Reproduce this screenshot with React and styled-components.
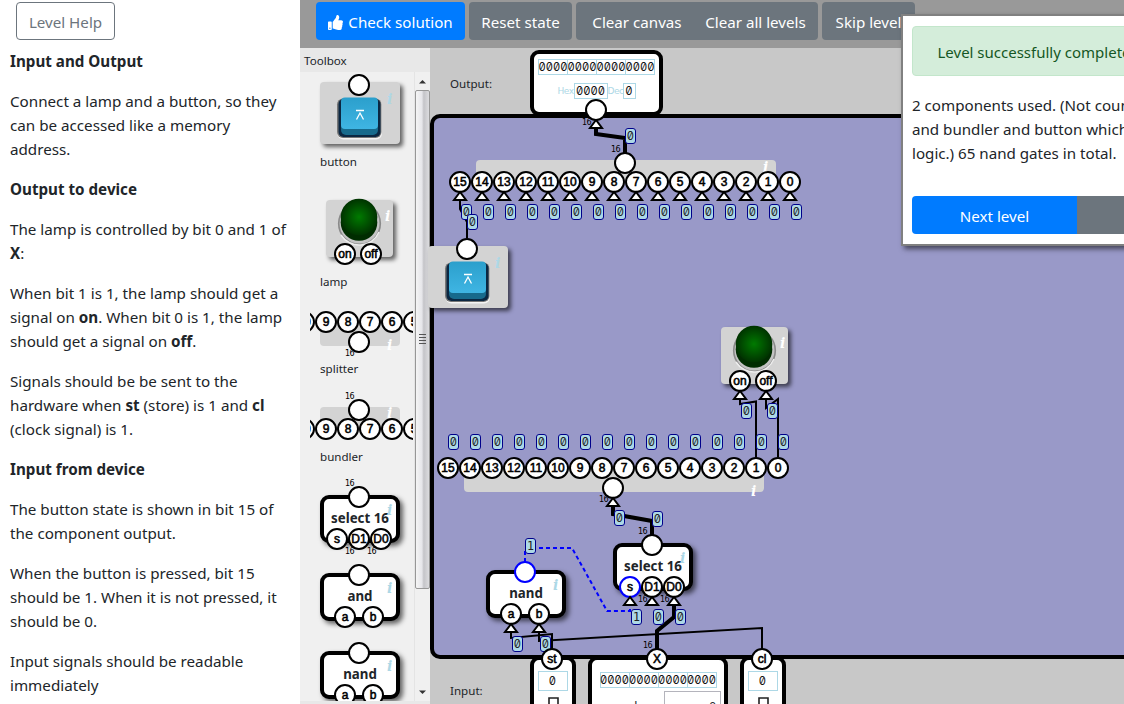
import React from "react";
import styled, { createGlobalStyle, css } from "styled-components";
import { FaThumbsUp } from "react-icons/fa";

const Global = createGlobalStyle`
  * { box-sizing: border-box; }
  html, body { margin: 0; height: 100%; overflow: hidden; }
  body {
    font-family: "Noto Sans", sans-serif;
    font-size: 15.15px;
    line-height: 24px;
    color: #212529;
    background: #fff;
  }
`;

/* Diagram coordinates are window coordinates; the canvas begins here. */
const ORIGIN = { x: 430, y: 48 };

const Page = styled.div`
  display: flex;
  width: 1124px;
  height: 704px;
  overflow: hidden;
`;

/* ---------- help column ---------- */
const Help = styled.aside`
  flex: 0 0 300px;
  min-width: 0;
  padding: 2px 0 0 10px;
`;
const buttonBase = css`
  height: 38px;
  border: 1px solid transparent;
  font: inherit;
  line-height: 24px;
  display: inline-flex;
  align-items: center;
  justify-content: center;
  padding: 2px 0 0;
  white-space: nowrap;
`;
const HelpButton = styled.button`
  ${buttonBase}
  display: flex;
  width: 99px;
  margin: 0 0 9px 6px;
  border-color: #6c757d;
  border-radius: 4px;
  background: #fff;
  color: #6c757d;
`;
const HelpText = styled.p`
  margin: 0 0 16px;
  white-space: nowrap;
  font-size: 15.2px;
`;
const HelpTitle = styled(HelpText)`
  font-weight: 700;
`;

/* ---------- top bar ---------- */
const Main = styled.main`
  flex: 1;
  min-width: 0;
  display: flex;
  flex-direction: column;
  position: relative;
`;
const TopBar = styled.header`
  flex: 0 0 48px;
  display: flex;
  align-items: flex-start;
  gap: 4px;
  padding: 2px 0 0 16px;
  background: #999;
`;
const BarButton = styled.button`
  ${buttonBase}
  flex: 0 0 auto;
  gap: 5px;
  width: ${(p) => p.$w}px;
  padding-right: ${(p) => p.$padRight || 0}px;
  border-radius: ${(p) => p.$radius || "4px"};
  background: ${(p) => (p.$primary ? "#007bff" : "#6c757d")};
  color: #fff;
`;
const ButtonGroup = styled.div`
  display: flex;
`;

const Body = styled.div`
  flex: 1;
  display: flex;
  min-height: 0;
`;

/* ---------- toolbox ---------- */
const Toolbox = styled.section`
  flex: 0 0 130px;
  min-width: 0;
  display: flex;
  flex-direction: column;
  background: #e8e8e8;
`;
const ToolboxTitle = styled.div`
  flex: 0 0 24px;
  padding: 3px 0 1px 4px;
  font-size: 11.6px;
  line-height: 20px;
`;
const ToolboxBody = styled.div`
  display: flex;
  height: 629px;
  background: #f0f0f0;
`;
const ToolList = styled.div`
  margin-left: 10px;
  width: 103px;
  padding-left: 10px;
  overflow: hidden;
`;
const Tool = styled.div`
  padding-top: ${(p) => p.$gap}px;
  padding-left: ${(p) => p.$indent || 0}px;
`;
const ToolLabel = styled.div`
  margin-top: ${(p) => p.$top}px;
  margin-left: -${(p) => p.$outdent || 0}px;
  height: 18px;
  line-height: 18px;
  font-size: 11.6px;
`;
const Scrollbar = styled.div`
  width: 16px;
  margin-left: 1px;
  display: flex;
  flex-direction: column;
  align-items: center;
  background: #f0f0f0;
  border-left: 1px solid #e4e4e4;
`;
const ScrollArrow = styled.div`
  height: 18px;
  display: flex;
  align-items: center;
`;
const ScrollThumb = styled.div`
  width: 15px;
  height: 499px;
  border: 1px solid #979797;
  border-radius: 2px;
  background: linear-gradient(90deg, #f5f5f5, #e6e6ea 45%, #c4c4c8 60%, #dcdcdf);
  display: flex;
  flex-direction: column;
  align-items: center;
  justify-content: center;
  gap: 1px;
`;
const Grip = styled.div`
  width: 7px;
  height: 1px;
  background: #555;
  margin-bottom: 1px;
`;
const ScrollTrack = styled.div`
  flex: 1;
`;

/* ---------- canvas ---------- */
const Canvas = styled.section`
  flex: 1;
  min-width: 0;
  position: relative;
  background: #c8c8c8;
  display: flex;
  flex-direction: column;
`;
const PortRow = styled.div`
  flex: 0 0 ${(p) => p.$h}px;
  padding: ${(p) => p.$top}px 0 0 20px;
  font-size: 11.6px;
  line-height: 18px;
`;
const Board = styled.div`
  flex: 0 0 545px;
  margin-right: -40px;
  border: 4px solid #000;
  border-radius: 10px;
  background: #9999c8;
`;
const Placed = styled.div`
  position: absolute;
  left: ${(p) => p.$x - ORIGIN.x}px;
  top: ${(p) => p.$y - ORIGIN.y}px;
`;
const WireLayer = styled.svg`
  position: absolute;
  left: 0;
  top: 0;
  width: 694px;
  height: 656px;
`;

/* ---------- components on the canvas and in the toolbox ---------- */
const PinCircle = styled.span`
  position: absolute;
  left: ${(p) => p.$cx - 11}px;
  top: ${(p) => p.$cy - 11}px;
  width: 22px;
  height: 22px;
  border: 2px solid ${(p) => (p.$on ? "#0000ff" : "#000")};
  border-radius: 50%;
  background: #fff;
  color: #000;
  display: flex;
  align-items: center;
  justify-content: center;
  font: 400 12px/18px "Liberation Sans", sans-serif;
  -webkit-text-stroke: 0.55px #000;
  white-space: nowrap;
`;
const Width = styled.span`
  position: absolute;
  left: ${(p) => p.$cx - 5}px;
  top: ${(p) => p.$cy - 6}px;
  font: 400 8px/12px "DejaVu Sans", sans-serif;
  letter-spacing: -0.6px;
  color: #000;
`;
const Info = styled.span`
  position: absolute;
  left: ${(p) => p.$cx - 3}px;
  top: ${(p) => p.$cy - 8}px;
  font: italic 700 14px/16px "DejaVu Serif", serif;
  color: ${(p) => (p.$white ? "#fff" : "#add8e6")};
`;
const GateBody = styled.div`
  position: relative;
  width: 80px;
  height: 48px;
  border: 4px solid #000;
  border-radius: 9px;
  background: #fff;
  box-shadow: 3px 3px 5px rgba(0, 0, 0, 0.6);
  font-weight: 700;
  font-size: 13.3px;
  line-height: 18px;
  text-align: center;
  white-space: nowrap;
  padding-top: 10px;
`;
const PinLayer = styled.div`
  position: absolute;
  left: -4px;
  top: -4px;
`;
const Plate = styled.div`
  position: relative;
  width: ${(p) => p.$w}px;
  height: ${(p) => p.$h}px;
  border-radius: 4px;
  background: #d3d3d3;
  box-shadow: ${(p) => (p.$flat ? "none" : "3px 3px 4px rgba(0,0,0,.6)")};
`;
const Drawing = styled.svg`
  position: absolute;
  left: 0;
  top: 0;
  overflow: visible;
`;

/* Zeros are slashed; the monospace face is kept for the serifed one. */
const slashedZero = css`
  font-family: "Inter", "DejaVu Sans Mono", monospace;
  font-size: 11.2px;
  font-feature-settings: "zero" 1, "tnum" 1;
`;
const Badge = styled.span`
  position: absolute;
  left: ${(p) => p.$x - ORIGIN.x - 5}px;
  top: ${(p) => p.$y - ORIGIN.y - 8}px;
  width: 11px;
  height: 16px;
  border: 1px solid #00008b;
  border-radius: 3px;
  background: #add8e6;
  color: #222;
  font: 400 11.6px/14px "DejaVu Sans Mono", monospace;
  ${(p) => p.children === "0" && slashedZero}
  text-align: center;
  display: flex;
  justify-content: center;
`;

const Pin = ({ x, y, on, children }) => (
  <PinCircle $cx={x} $cy={y} $on={on}>{children}</PinCircle>
);

function Gate({ label, inputs, wide, on, litInput }) {
  return (
    <GateBody>
      {label}
      <PinLayer>
        <Info $cx={70} $cy={15}>i</Info>
        <Pin x={39} y={2} on={on} />
        {inputs.map((name, i) => (
          <Pin key={name} x={wide ? 17 + i * 22 : 25 + i * 28} y={44} on={litInput === name}>{name}</Pin>
        ))}
        {wide && (
          <>
            <Width $cx={30} $cy={-11}>16</Width>
            <Width $cx={30} $cy={57}>16</Width>
            <Width $cx={52} $cy={57}>16</Width>
          </>
        )}
      </PinLayer>
    </GateBody>
  );
}

function PushButton() {
  return (
    <Plate $w={80} $h={62}>
      <Drawing width="80" height="62">
        <defs>
          <linearGradient id="keyFace" x1="0" y1="0" x2="0" y2="1">
            <stop offset="0" stopColor="#2b9fcc" />
            <stop offset="1" stopColor="#3fb5e3" />
          </linearGradient>
        </defs>
        <rect x="17.5" y="18" width="44.5" height="39.5" rx="6" fill="#f4f4f4" />
        <rect x="17" y="16.5" width="44.5" height="39.5" rx="6" fill="#777" />
        <rect x="18.5" y="17" width="42" height="38" rx="5" fill="#0b2742" />
        <rect x="21" y="18" width="37" height="35" rx="5" fill="#176a8c" />
        <rect x="21" y="15.5" width="37" height="31.5" rx="4" fill="url(#keyFace)" />
        <path d="M36 28.5h8M36.5 37.5l3.5-6.5 3.5 6.5" fill="none" stroke="#fff" strokeWidth="1.3" />
      </Drawing>
      <Info $cx={70} $cy={17}>i</Info>
      <Pin x={39} y={3} />
    </Plate>
  );
}

function Lamp() {
  return (
    <Plate $w={67} $h={57}>
      <Drawing width="67" height="57">
        <defs>
          <radialGradient id="lampGlow" cx="50%" cy="50%" r="50%">
            <stop offset="0" stopColor="#007a00" />
            <stop offset="1" stopColor="#003300" />
          </radialGradient>
        </defs>
        <circle cx="33.5" cy="23.5" r="20.8" fill="#c4c4c4" stroke="#8a8a8a" strokeWidth="1.6" />
        <path d="M15 35a21.5 21.5 0 0 0 38-3" fill="none" stroke="#eee" strokeWidth="1.5" />
        <circle cx="33" cy="22.5" r="18.3" fill="#002c00" />
        <circle cx="33" cy="17" r="18.3" fill="url(#lampGlow)" />
      </Drawing>
      <Info $white $cx={62} $cy={16}>i</Info>
      <Pin x={19} y={54}>on</Pin>
      <Pin x={45} y={54}>off</Pin>
    </Plate>
  );
}

const BITS = Array.from({ length: 16 }, (_, i) => 15 - i);
const MIDDLE_BITS = [10, 9, 8, 7, 6, 5];

/* A 16-bit splitter (bits above) or bundler (bits below). */
function BitStrip({ bits = BITS, width, height, barPinX, bitsY, barPinY, widthMark, info }) {
  return (
    <Plate $flat $w={width} $h={height}>
      <Info $white $cx={info[0]} $cy={info[1]}>i</Info>
      {bits.map((bit, i) => (
        <Pin key={bit} x={i * 22 - 16} y={bitsY}>{bit}</Pin>
      ))}
      <Pin x={barPinX} y={barPinY} />
      <Width $cx={widthMark[0]} $cy={widthMark[1]}>16</Width>
    </Plate>
  );
}

/* ---------- input / output panels ---------- */
const Panel = styled.div`
  position: relative;
  width: ${(p) => p.$w}px;
  height: ${(p) => p.$h}px;
  border: 4px solid #000;
  border-radius: 9px;
  background: #fff;
  display: flex;
  flex-direction: column;
  align-items: center;
  padding-top: ${(p) => p.$pad}px;
`;
const Digits = styled.div`
  display: flex;
  padding-left: 1px;
`;
const Field = styled.span`
  flex: 0 0 auto;
  width: ${(p) => p.$w}px;
  height: ${(p) => p.$h || 16}px;
  margin-left: -1px;
  border: 1px solid #add8e6;
  background: #fff;
  color: #111;
  line-height: ${(p) => (p.$h || 16) - 2}px;
  ${slashedZero}
  display: flex;
  justify-content: center;
`;
const Values = styled.div`
  display: flex;
  align-items: center;
  margin-top: 8px;
`;
const Caption = styled.span`
  flex: 0 0 ${(p) => p.$w}px;
  font: 400 9px/14px "DejaVu Sans", sans-serif;
  letter-spacing: -0.5px;
  color: #add8e6;
`;
const Pulse = styled.svg`
  margin-top: 6px;
  display: block;
`;
const DecRow = styled.label`
  display: flex;
  align-self: stretch;
  margin-top: 3px;
  padding-left: 38px;
  font-size: 12px;
`;
const DecName = styled.span`
  flex: 0 0 34px;
  line-height: 31px;
`;
const DecInput = styled.span`
  flex: 0 0 57px;
  height: 24px;
  border: 1px solid #b4b4bc;
  padding-right: 4px;
  line-height: 29px;
  text-align: right;
`;
const Nibbles = () => (
  <Digits>
    {[0, 1, 2, 3].map((n) => <Field key={n} $w={30}>0000</Field>)}
  </Digits>
);

/* ---------- result dialog ---------- */
const Dialog = styled.div`
  position: absolute;
  left: 601px;
  top: 14px;
  width: 351px;
  height: 232px;
  padding: 10px 9px 0;
  border: 2px solid #808080;
  background: #fff;
  box-shadow: 3px 3px 5px rgba(0, 0, 0, 0.55);
`;
const Alert = styled.div`
  height: 50px;
  padding: 13px 24.5px;
  border: 1px solid #c3e6cb;
  border-radius: 4px;
  background: #d4edda;
  color: #155724;
  font-size: 15px;
  white-space: nowrap;
`;
const Result = styled.p`
  margin: 17px 0 31px;
  white-space: nowrap;
`;

const BOARD_BADGES = [
  [630, 136], [472, 222], [619, 518], [657, 519], [746, 411], [772, 411],
  [658, 617], [680, 617], [517, 644], [545, 644],
];
const ARROWS = [
  [596, 110], [613, 488], [740, 381], [766, 381], [511, 614], [539, 614],
  [630, 587], [652, 587], [674, 587],
  ...BITS.map((_, i) => [460 + i * 22, 182]),
];

function Wires() {
  return (
    <WireLayer viewBox="430 48 694 656">
      <g fill="none" stroke="#000" strokeWidth="2">
        <path d="M460 200v9l7 13v16" />
        <path d="M740 398v6l16-2.5v56" />
        <path d="M766 398v10l12-9v58" />
        <path d="M511 632v6l41-4v16" />
        <path d="M539 632v9L762 628v22" />
      </g>
      <g fill="none" stroke="#000" strokeWidth="4">
        <path d="M596 128v6l29 4v16" />
        <path d="M613 506v8l39 7v15" />
        <path d="M674 605v12l-17 14v18" />
      </g>
      <path d="M525 562v-14h47l35 63h23v-6" fill="none" stroke="#00f" strokeWidth="2" strokeDasharray="4 3" />
      <g fill="#fff" stroke="#000" strokeWidth="2">
        {ARROWS.map(([x, y], i) => (
          <path key={i} d={`M${x} ${y + 10}l-6 8h12z`} />
        ))}
      </g>
    </WireLayer>
  );
}

export default function App() {
  return (
    <Page>
      <Global />
      <Help>
        <HelpButton>Level Help</HelpButton>
        <HelpTitle>Input and Output</HelpTitle>
        <HelpText>Connect a lamp and a button, so they<br />can be accessed like a memory<br />address.</HelpText>
        <HelpTitle>Output to device</HelpTitle>
        <HelpText>The lamp is controlled by bit 0 and 1 of<br /><b>X</b>:</HelpText>
        <HelpText>When bit 1 is 1, the lamp should get a<br />signal on <b>on</b>. When bit 0 is 1, the lamp<br />should get a signal on <b>off</b>.</HelpText>
        <HelpText>Signals should be be sent to the<br />hardware when <b>st</b> (store) is 1 and <b>cl</b><br />(clock signal) is 1.</HelpText>
        <HelpTitle>Input from device</HelpTitle>
        <HelpText>The button state is shown in bit 15 of<br />the component output.</HelpText>
        <HelpText>When the button is pressed, bit 15<br />should be 1. When it is not pressed, it<br />should be 0.</HelpText>
        <HelpText>Input signals should be readable<br />immediately</HelpText>
      </Help>
      <Main>
        <TopBar>
          <BarButton $primary $w={149}><FaThumbsUp size={15} />Check solution</BarButton>
          <BarButton $w={103}>Reset state</BarButton>
          <ButtonGroup>
            <BarButton $w={122} $radius="4px 0 0 4px">Clear canvas</BarButton>
            <BarButton $w={120} $padRight={5} $radius="0 4px 4px 0">Clear all levels</BarButton>
          </ButtonGroup>
          <BarButton $w={93}>Skip level</BarButton>
        </TopBar>
        <Body>
          <Toolbox>
            <ToolboxTitle>Toolbox</ToolboxTitle>
            <ToolboxBody>
              <ToolList>
                <Tool $gap={10}><PushButton /><ToolLabel $top={9}>button</ToolLabel></Tool>
                <Tool $gap={29} $indent={6}><Lamp /><ToolLabel $top={16} $outdent={6}>lamp</ToolLabel></Tool>
                <Tool $gap={31}>
                  <BitStrip bits={MIDDLE_BITS} width={80} height={24} barPinX={39} bitsY={0} barPinY={20} widthMark={[30, 32]} info={[70, 23]} />
                  <ToolLabel $top={14}>splitter</ToolLabel>
                </Tool>
                <Tool $gap={29}>
                  <BitStrip bits={MIDDLE_BITS} width={80} height={23} barPinX={39} bitsY={22} barPinY={3} widthMark={[30, -10]} info={[70, 6]} />
                  <ToolLabel $top={18}>bundler</ToolLabel>
                </Tool>
                <Tool $gap={29}><Gate wide label="select 16" inputs={["s", "D1", "D0"]} /></Tool>
                <Tool $gap={30}><Gate label="and" inputs={["a", "b"]} /></Tool>
                <Tool $gap={30}><Gate label="nand" inputs={["a", "b"]} /></Tool>
              </ToolList>
              <Scrollbar>
                <ScrollArrow><svg width="8" height="5"><path d="M0 4.5L3.5 1 7 4.5z" fill="#333" /></svg></ScrollArrow>
                <ScrollThumb><Grip /><Grip /><Grip /><Grip /></ScrollThumb>
                <ScrollTrack />
                <ScrollArrow><svg width="8" height="5"><path d="M0 .5L3.5 4 7 .5z" fill="#333" /></svg></ScrollArrow>
              </Scrollbar>
            </ToolboxBody>
          </Toolbox>
          <Canvas>
            <PortRow $h={66} $top={27}>Output:</PortRow>
            <Board />
            <PortRow $h={45} $top={23}>Input:</PortRow>

            <Placed $x={530} $y={50}>
              <Panel $w={133} $h={66} $pad={5}>
                <Nibbles />
                <Values>
                  <Caption $w={17}>Hex</Caption>
                  <Field $w={34}>0000</Field>
                  <Caption $w={16}>Dec</Caption>
                  <Field $w={13}>0</Field>
                </Values>
              </Panel>
            </Placed>
            <Placed $x={530} $y={656}>
              <Panel $w={46} $h={80} $pad={11}>
                <Field $w={30} $h={20}>0</Field>
                <Pulse width="11" height="12"><path d="M1 12V1h9v11" fill="none" stroke="#222" strokeWidth="1.6" /></Pulse>
              </Panel>
            </Placed>
            <Placed $x={588} $y={656}>
              <Panel $w={140} $h={80} $pad={12}>
                <Nibbles />
                <DecRow><DecName>dec</DecName><DecInput>0</DecInput></DecRow>
              </Panel>
            </Placed>
            <Placed $x={740} $y={656}>
              <Panel $w={46} $h={80} $pad={11}>
                <Field $w={30} $h={20}>0</Field>
                <Pulse width="11" height="12"><path d="M1 12V1h9v11" fill="none" stroke="#222" strokeWidth="1.6" /></Pulse>
              </Panel>
            </Placed>

            <Placed $x={476} $y={160}>
              <BitStrip width={300} height={24} barPinX={149} bitsY={22} barPinY={3} widthMark={[140, -10]} info={[290, 7]} />
            </Placed>
            <Placed $x={464} $y={468}>
              <BitStrip width={300} height={24} barPinX={149} bitsY={0} barPinY={20} widthMark={[140, 32]} info={[290, 23]} />
            </Placed>
            <Placed $x={486} $y={570}><Gate label="nand" inputs={["a", "b"]} on /></Placed>
            <Placed $x={613} $y={543}><Gate wide label="select 16" inputs={["s", "D1", "D0"]} litInput="s" /></Placed>
            <Placed $x={721} $y={327}><Lamp /></Placed>
            <Wires />
            <Placed $x={428} $y={246}><PushButton /></Placed>

            {BITS.map((bit, i) => <Badge key={`in${bit}`} $x={466 + i * 22} $y={212}>0</Badge>)}
            {BITS.map((bit, i) => <Badge key={`out${bit}`} $x={453 + i * 22} $y={442}>0</Badge>)}
            {BOARD_BADGES.map(([x, y]) => <Badge key={`${x}-${y}`} $x={x} $y={y}>0</Badge>)}
            <Badge $x={530} $y={546}>1</Badge>
            <Badge $x={636} $y={617}>1</Badge>

            <Placed $x={596} $y={110}><Pin x={0} y={0} /><Width $cx={-9} $cy={13}>16</Width></Placed>
            <Placed $x={552} $y={659}><Pin x={0} y={0}>st</Pin></Placed>
            <Placed $x={657} $y={659}><Pin x={0} y={0}>X</Pin><Width $cx={-9} $cy={-13}>16</Width></Placed>
            <Placed $x={762} $y={659}><Pin x={0} y={0}>cl</Pin></Placed>
          </Canvas>
        </Body>
        <Dialog>
          <Alert>Level successfully completed!</Alert>
          <Result>2 components used. (Not counting splitter<br />and bundler and button which is not<br />logic.) 65 nand gates in total.</Result>
          <ButtonGroup>
            <BarButton $primary $w={165} $radius="4px 0 0 4px">Next level</BarButton>
            <BarButton $w={165} $radius="0 4px 4px 0" aria-label="Close" />
          </ButtonGroup>
        </Dialog>
      </Main>
    </Page>
  );
}
